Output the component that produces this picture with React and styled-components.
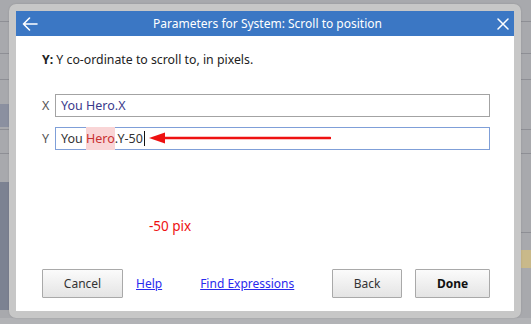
import React from 'react';
import styled, { createGlobalStyle } from 'styled-components';

const GlobalStyle = createGlobalStyle`
  html, body {
    margin: 0;
    padding: 0;
  }
  body {
    font-family: "Noto Sans", "Open Sans", sans-serif;
    background: #a6a7ab;
  }
`;

function App() {
  return (
    <>
      <GlobalStyle />
      <Backdrop>
        <Frame>
          <Dialog>
            <Header>
              <IconButton aria-label="Back">
                <svg width="16" height="14" viewBox="0 0 16 14" fill="none" stroke="#fff" strokeWidth="1.6" strokeLinecap="round" strokeLinejoin="round">
                  <path d="M15 7H1.5M7.5 1L1.5 7l6 6" />
                </svg>
              </IconButton>
              <Title>Parameters for System: Scroll to position</Title>
              <IconButton aria-label="Close">
                <svg width="12" height="12" viewBox="0 0 12 12" stroke="#fff" strokeWidth="1.5" strokeLinecap="round">
                  <path d="M1 1l10 10M11 1L1 11" />
                </svg>
              </IconButton>
            </Header>
            <Body>
              <Description>
                <strong>Y:</strong> Y co-ordinate to scroll to, in pixels.
              </Description>
              <Fields>
                <FieldRow>
                  <Label>X</Label>
                  <Input>
                    <Expr $tone="navy">You Hero.X</Expr>
                  </Input>
                </FieldRow>
                <FieldRow>
                  <Label>Y</Label>
                  <Input $focused>
                    <Expr>
                      You <Hit>Hero</Hit>.Y-50
                    </Expr>
                    <Caret />
                    <Pointer width="182" height="12" viewBox="0 0 182 12">
                      <path d="M0 6l16-5.5v11z" fill="#ee1111" />
                      <path d="M12 6h169" stroke="#ee1111" strokeWidth="2.6" strokeLinecap="round" />
                    </Pointer>
                  </Input>
                </FieldRow>
              </Fields>
              <Note>-50 pix</Note>
              <Footer>
                <Group>
                  <Button $w={81}>Cancel</Button>
                  <Link $gap={13}>Help</Link>
                  <Link $gap={38}>Find Expressions</Link>
                </Group>
                <Group>
                  <Button $w={70}>Back</Button>
                  <Button $w={75} $primary>Done</Button>
                </Group>
              </Footer>
            </Body>
          </Dialog>
        </Frame>
      </Backdrop>
    </>
  );
}

export default App;

const Backdrop = styled.div`
  width: 531px;
  height: 324px;
  display: flex;
  justify-content: flex-start;
  align-items: flex-start;
  padding: 4px 0 0 9px;
  box-sizing: border-box;
  background-color: #a8a9ad;
  background-repeat: no-repeat;
  background-image:
    linear-gradient(#8b90a0, #8b90a0),
    linear-gradient(#7c8292, #7c8292),
    linear-gradient(#c9b98a, #c9b98a),
    linear-gradient(#8e8f95, #8e8f95),
    linear-gradient(#8e8f95, #8e8f95),
    linear-gradient(#8e8f95, #8e8f95),
    linear-gradient(#8e8f95, #8e8f95),
    linear-gradient(#8e8f95, #8e8f95),
    linear-gradient(#8e8f95, #8e8f95),
    linear-gradient(#b2b3b6, #b2b3b6);
  background-size:
    9px 23px,
    9px 128px,
    10px 18px,
    100% 1px,
    100% 1px,
    100% 1px,
    100% 1px,
    100% 1px,
    100% 1px,
    100% 6px;
  background-position:
    0 104px,
    0 182px,
    521px 250px,
    0 21px,
    0 53px,
    0 79px,
    0 129px,
    0 153px,
    0 232px,
    0 318px;
`;

const Frame = styled.div`
  width: 512px;
  height: 314px;
  padding: 7px;
  box-sizing: border-box;
  background: #c7c7c7;
  border-radius: 7px;
  box-shadow: 0 0 2px rgba(0, 0, 0, 0.15);
`;

const Dialog = styled.div`
  height: 100%;
  display: flex;
  flex-direction: column;
  background: #fff;
`;

const Header = styled.div`
  height: 25px;
  flex: none;
  display: flex;
  align-items: center;
  justify-content: space-between;
  padding: 0 3px 0 6px;
  background: #3b77c4;
  color: #fff;
`;

const IconButton = styled.span`
  width: 16px;
  height: 16px;
  display: flex;
  align-items: center;
  justify-content: center;
`;

const Title = styled.div`
  flex: 1;
  text-align: center;
  font-size: 12px;
  padding-left: 2px;
`;

const Body = styled.div`
  flex: 1;
  display: flex;
  flex-direction: column;
  padding: 16px 24px 13px 26px;
`;

const Description = styled.div`
  font-size: 12.3px;
  color: #222;
  line-height: 16px;

  strong {
    font-weight: 700;
  }
`;

const Fields = styled.div`
  display: flex;
  flex-direction: column;
  gap: 10px;
  margin-top: 26px;
`;

const FieldRow = styled.div`
  display: flex;
  align-items: center;
`;

const Label = styled.span`
  width: 13px;
  font-size: 12.5px;
  color: #555;
`;

const Input = styled.div`
  position: relative;
  flex: 1;
  height: 23px;
  box-sizing: border-box;
  display: flex;
  align-items: center;
  padding: 0 5px;
  border: 1px solid ${p => (p.$focused ? '#7f9fd8' : '#a3a3a3')};
  font-size: 12.5px;
`;

const Expr = styled.span`
  color: ${p => (p.$tone === 'navy' ? '#3a3a8c' : '#333')};
  white-space: pre;
`;

const Hit = styled.span`
  color: #c83030;
  background: #f9d5d6;
  padding: 3px 0 3px;
`;

const Caret = styled.span`
  width: 1px;
  height: 15px;
  margin-left: 1px;
  background: #111;
`;

const Pointer = styled.svg`
  position: absolute;
  left: 93px;
  top: 4px;
`;

const Note = styled.div`
  margin: 68px 0 0 107px;
  font-size: 13.5px;
  color: #ee1111;
  line-height: 16px;
`;

const Footer = styled.div`
  margin-top: auto;
  display: flex;
  justify-content: space-between;
  align-items: center;
`;

const Group = styled.div`
  display: flex;
  align-items: center;
  gap: 13px;
`;

const Button = styled.button`
  width: ${p => p.$w}px;
  height: 29px;
  padding: 0;
  border: 1px solid #a9a9a9;
  border-radius: 1px;
  background: linear-gradient(#fbfbfb, #e4e4e4);
  font-family: inherit;
  font-size: 12px;
  font-weight: ${p => (p.$primary ? 700 : 400)};
  color: ${p => (p.$primary ? '#111' : '#333')};
`;

const Link = styled.a`
  margin-left: ${p => p.$gap - 13}px;
  font-size: 12px;
  color: #2a2aee;
  text-decoration: underline;
  cursor: pointer;
`;
